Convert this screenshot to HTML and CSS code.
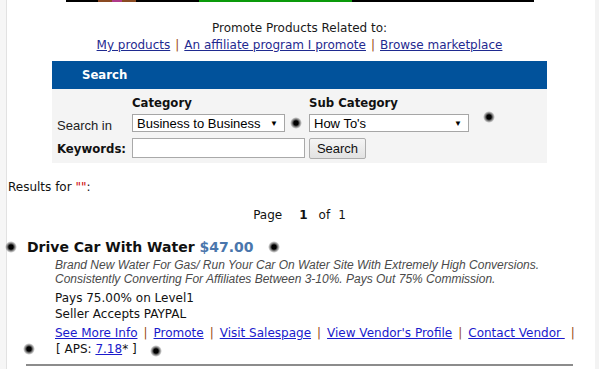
FILE: index.html
```html
<!DOCTYPE html>
<html>
<head>
<meta charset="utf-8">
<link rel="stylesheet" href="styles.css">
</head>
<body>
<div class="page">
  <div class="side-left"></div>
  <main class="main">
    <div class="banner"><span class="seg-brown"><span class="seg-pink"></span></span><span class="seg-green"></span></div>
    <div class="related">
      <div class="related-title">Promote Products Related to:</div>
      <div class="related-links">
        <a href="#">My products</a><span class="sep">|</span><a href="#">An affiliate program I promote</a><span class="sep">|</span><a href="#">Browse marketplace</a>
      </div>
    </div>

    <section class="search">
      <div class="search-head">Search</div>
      <div class="search-body">
        <div class="cell"></div>
        <div class="cell hdr">Category</div>
        <div class="cell hdr">Sub Category</div>

        <div class="cell lbl">Search in</div>
        <div class="cell row">
          <div class="fsel sel1"><span>Business to Business</span><span class="arr">▼</span></div>
          <span class="dot dot-a"></span>
        </div>
        <div class="cell row">
          <div class="fsel sel2"><span>How To's</span><span class="arr">▼</span></div>
          <span class="dot dot-b"></span>
        </div>

        <div class="cell lbl bold">Keywords:</div>
        <div class="cell"><input class="kw" type="text"></div>
        <div class="cell"><button class="btn">Search</button></div>
      </div>
    </section>

    <div class="results">Results for <span class="q">""</span>:</div>
    <div class="pager"><span>Page</span><b>1</b><span class="of">of</span><span>1</span></div>

    <article class="product">
      <div class="title-row"><span class="dot dot-t"></span><h2 class="title">Drive Car With Water <span class="price">$47.00</span></h2><span class="dot dot-p"></span></div>
      <div class="body">
        <p class="desc">Brand New Water For Gas/ Run Your Car On Water Site With Extremely High Conversions. Consistently Converting For Affiliates Between 3-10%. Pays Out 75% Commission.</p>
        <div class="info">Pays 75.00% on Level1</div>
        <div class="info">Seller Accepts PAYPAL</div>
        <div class="actions">
          <a href="#">See More Info</a><span class="sep">|</span><a href="#">Promote</a><span class="sep">|</span><a href="#">Visit Salespage</a><span class="sep">|</span><a href="#">View Vendor's Profile</a><span class="sep">|</span><a href="#">Contact Vendor </a><span class="sep">|</span>
        </div>
        <div class="aps-row"><span class="dot dot-l"></span><span class="aps">[ APS: <a href="#">7.18</a>* ]</span><span class="dot dot-r"></span></div>
      </div>
      <hr class="rule">
    </article>
  </main>
  <div class="side-right"></div>
</div>
</body>
</html>
```

FILE: styles.css
```css
html, body {
  margin: 0;
  padding: 0;
  background: #fff;
}
body {
  font-family: "DejaVu Sans", sans-serif;
  font-size: 12px;
  color: #111;
}
.page {
  display: flex;
  min-height: 369px;
}
.side-left {
  width: 6px;
  background: #f6f6f6;
  border-right: 1px solid #e2e2e2;
  flex: none;
}
.side-right {
  width: 4px;
  background: #f3f3f3;
  flex: none;
}
.main {
  flex: 1;
  min-width: 0;
  padding: 0 4px 0 1px;
}
.banner {
  width: 468px;
  height: 2px;
  background: #000;
  margin: 0 auto;
  display: flex;
}
.seg-brown {
  margin-left: 32px;
  width: 38px;
  height: 2px;
  background: #8a4a22;
  display: flex;
  justify-content: center;
}
.seg-pink {
  width: 10px;
  height: 2px;
  background: #b03a8a;
}
.seg-green {
  margin-left: 63px;
  width: 153px;
  height: 2px;
  background: #0a9a0a;
}
.related {
  text-align: center;
  padding-top: 18px;
  line-height: 17px;
  font-size: 12px;
  color: #1a1a1a;
}
.related a {
  color: #1f2a90;
}
.sep {
  color: #9a4a10;
  margin: 0 6px;
}
.related .sep {
  margin: 0 5px;
}
.search {
  width: 495px;
  margin: 7px auto 0;
}
.search-head {
  background: #01529b;
  color: #fff;
  font-family: "DejaVu Sans Condensed", "DejaVu Sans", sans-serif;
  font-weight: bold;
  font-size: 13px;
  height: 28px;
  line-height: 28px;
  padding-left: 30px;
}
.search-body {
  background: #f4f4f4;
  display: grid;
  grid-template-columns: 75px 177px 1fr;
  grid-template-rows: 19px 23px 22px;
  padding: 6px 0 4px 5px;
  font-family: "Liberation Sans", Arial, sans-serif;
  font-size: 13px;
}
.cell {
  display: flex;
  align-items: center;
}
.hdr {
  font-family: "DejaVu Sans Condensed", "DejaVu Sans", sans-serif;
  font-weight: bold;
  font-size: 13px;
  align-items: flex-start;
}
.lbl {
  color: #222;
}
.bold {
  font-family: "DejaVu Sans Condensed", "DejaVu Sans", sans-serif;
  font-weight: bold;
  color: #111;
}
.row {
  align-items: flex-start;
}
.fsel {
  box-sizing: border-box;
  height: 18px;
  background: #fff;
  border: 1px solid #a6a6a6;
  display: flex;
  align-items: center;
  justify-content: space-between;
  padding: 0 6px 0 4px;
  font-size: 13px;
  color: #000;
}
.sel1 { width: 153px; }
.sel2 { width: 160px; }
.arr {
  font-size: 8px;
}
.kw {
  box-sizing: border-box;
  width: 173px;
  height: 20px;
  border: 1px solid #a9a9a9;
  margin: 0;
  padding: 0 2px;
  background: #fff;
}
.btn {
  box-sizing: border-box;
  height: 21px;
  width: 57px;
  margin: 0;
  padding: 0;
  border: 1px solid #adadad;
  border-radius: 2px;
  background: linear-gradient(#f5f5f5, #e2e2e2);
  font-family: "Liberation Sans", Arial, sans-serif;
  font-size: 13px;
  color: #111;
}
.dot {
  display: inline-block;
  width: 12px;
  height: 12px;
  border-radius: 50%;
  background: radial-gradient(circle, #000 0, #000 25%, rgba(0,0,0,0.5) 45%, rgba(0,0,0,0) 70%);
  flex: none;
}
.dot-a { margin: 3px 0 0 5px; }
.dot-b { margin: -3px 0 0 14px; }
.results {
  margin-top: 16px;
  line-height: 16px;
}
.q { color: #c00; }
.pager {
  display: flex;
  justify-content: center;
  margin-top: 12px;
  line-height: 16px;
}
.pager b { margin: 0 11px 0 17px; }
.pager .of { margin-right: 8px; }
.product {
  margin-top: 15px;
}
.title-row {
  display: flex;
  align-items: center;
  height: 18px;
}
.dot-t { margin-left: -3px; }
.title {
  margin: 0 0 0 10px;
  font-size: 14px;
  font-weight: bold;
  color: #111;
}
.price { color: #4a76ac; }
.dot-p { margin-left: 15px; }
.body {
  padding-left: 47px;
}
.desc {
  margin: 2px 0 0;
  font-family: "Liberation Sans", Arial, sans-serif;
  font-style: italic;
  font-size: 12px;
  line-height: 14px;
  color: #4a4a4a;
  width: 500px;
}
.info {
  line-height: 16px;
}
.desc + .info { margin-top: 4px; }
.actions {
  margin-top: 3px;
  line-height: 16px;
}
.actions a { color: #1a1acc; }
.aps-row {
  display: flex;
  align-items: center;
  margin-left: -32px;
  line-height: 16px;
}
.dot-l { margin-right: 21px; }
.aps a { color: #1a1acc; }
.dot-r { margin-left: 13px; margin-top: 4px; }
.rule {
  margin: 7px 18px 0 18px;
  border: 0;
  border-top: 2px solid #8c8c8c;
}
```
